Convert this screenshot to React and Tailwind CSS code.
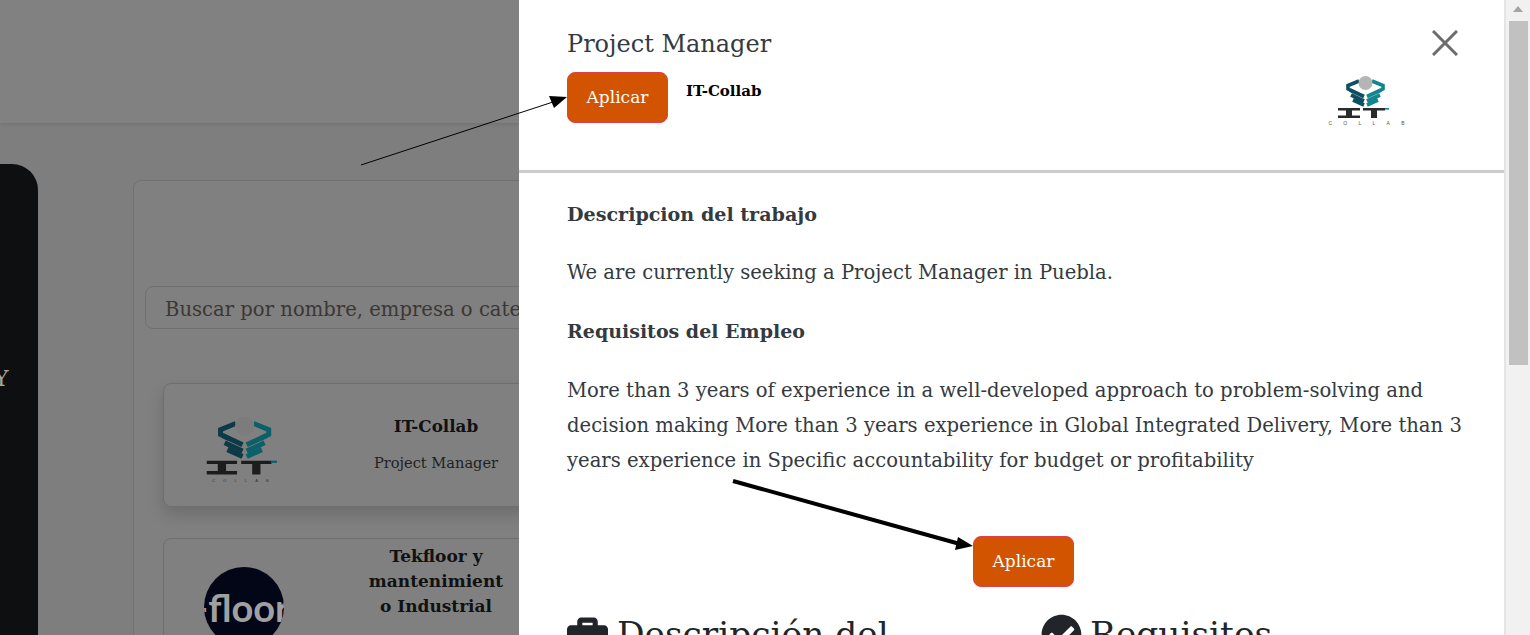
import React from 'react';
import { FaBriefcase, FaCheckCircle } from 'react-icons/fa';

function ItLogo({ className, dim }) {
  const ink = dim ? '#1c1c1c' : '#2a2a2a';
  const teal = dim ? '#0c6068' : '#12858f';
  const navy = dim ? '#0c3a46' : '#0f4f62';
  const ball = dim ? '#7c7c7c' : '#b5b5b5';
  return (
    <svg viewBox="0 0 77 52" className={className}>
      <g fill="none" strokeWidth="3.6">
        <path d="M31 6 L20 10.5 L20 14 L26 17" stroke={navy} />
        <path d="M44 6 L55 10.5 L55 14 L49 17" stroke={teal} />
        <path d="M22 15 L36 21.5 M23 20 L36 26 M25 25 L36 30" stroke={navy} />
        <path d="M53 15 L39 21.5 M52 20 L39 26 M50 25 L39 30" stroke={teal} />
      </g>
      <circle cx="37.5" cy="8" r="7" fill={ball} />
      <path d="M10 33 H32 V35.5 H24 V40.5 H32 V43 H10 V40.5 H18 V35.5 H10 Z M35 33 H57 V35.5 H49 V43 H43 V35.5 H35 Z" fill={ink} />
      <rect x="57" y="33" width="4" height="1.6" fill={teal} />
      {dim ? (
        <text x="14" y="48.5" fontSize="3" textLength="41" fill="#333" fontFamily="Liberation Sans, sans-serif">COLLAB</text>
      ) : (
        <text x="0.5" y="50" fontSize="5" textLength="76" fill="#555" fontFamily="Liberation Sans, sans-serif">COLLAB</text>
      )}
    </svg>
  );
}

function Arrows() {
  return (
    <svg className="absolute left-0 top-0 pointer-events-none" width="1530" height="635">
      <line x1="361" y1="165" x2="556" y2="101" stroke="#000" strokeWidth="1" />
      <path d="M567 97 L549 96 L554 108 Z" fill="#000" />
      <line x1="733" y1="481" x2="960" y2="544" stroke="#000" strokeWidth="4" />
      <path d="M973 546 L958 537 L955 550 Z" fill="#000" />
    </svg>
  );
}

function ApplyButton({ className }) {
  return (
    <button className={`flex h-[51px] w-[101px] items-center justify-center rounded-[8px] border border-[#e0404a] bg-[#d35400] text-[17px] text-white ${className}`}>
      Aplicar
    </button>
  );
}

function BackgroundPage() {
  return (
    <div className="flex h-[635px] w-[519px] shrink-0 flex-col overflow-hidden bg-[#7e7e7e]">
      <div className="h-[123px] shrink-0 bg-[#818181] shadow-[0_1px_4px_rgba(0,0,0,0.12)]" />
      <div className="flex flex-1 pt-[41px]">
        <div className="h-[600px] w-[38px] shrink-0 rounded-tr-[26px] bg-[#0e0f11] pt-[200px]">
          <span className="-ml-[6px] block text-[22px] leading-[30px] text-[#b0a898]">Y</span>
        </div>
        <div className="ml-[95px] mt-[16px] h-[600px] w-[500px] shrink-0 rounded-[8px] border border-[#707070] bg-[#808080] pl-[11px] pt-[105px]">
          <div className="flex h-[43px] w-[480px] items-center overflow-hidden rounded-[8px] border border-[#707070] pl-[19px] pt-[4px] text-[19.6px] whitespace-nowrap text-[#3d3733]">
            Buscar por nombre, empresa o categoría
          </div>
          <div className="ml-[18px] mt-[54px] flex h-[124px] w-[460px] rounded-[8px] border border-[#6e6e6e] shadow-[0_8px_16px_rgba(0,0,0,0.15)]">
            <div className="w-[164px] pl-[29px] pt-[31px]">
              <ItLogo dim className="h-[72px] w-[106px]" />
            </div>
            <div className="flex w-[216px] flex-col items-center justify-center gap-[13px] pb-[4px]">
              <div className="text-[16.8px] font-bold leading-[26px] text-[#111]">IT-Collab</div>
              <div className="text-[14.6px] leading-[22px] text-[#1f1f1f]">Project Manager</div>
            </div>
          </div>
          <div className="ml-[18px] mt-[31px] flex h-[124px] w-[460px] rounded-[8px] border border-[#6e6e6e]">
            <div className="flex w-[160px] justify-center pt-[28px]">
              <div className="flex h-[80px] w-[80px] shrink-0 items-center overflow-hidden rounded-full bg-[#020617] font-['Lato',sans-serif] text-[38px] leading-none font-bold whitespace-nowrap text-[#a0a0a0]">
                <span className="-ml-[10px]">-floor</span>
              </div>
            </div>
            <div className="ml-[42px] w-[140px] pt-[5px] text-center text-[17px] font-bold leading-[25px] break-words text-[#111]">
              Tekfloor y mantenimiento Industrial
            </div>
          </div>
        </div>
      </div>
    </div>
  );
}

function Drawer() {
  return (
    <div className="h-[635px] flex-1 overflow-hidden bg-white text-[#343a40]">
      <div className="flex h-[173px] border-b-[3px] border-[#cccccc] pl-[48px] pr-[46px]">
        <div className="flex-1 pt-[26px]">
          <h2 className="text-[24px] leading-[36px]">Project Manager</h2>
          <div className="mt-[10px] flex">
            <ApplyButton />
            <span className="ml-[18px] pt-[7px] text-[15px] font-bold leading-[24px] text-black">IT-Collab</span>
          </div>
        </div>
        <div className="flex w-[130px] flex-col items-end pt-[30px]">
          <svg viewBox="0 0 26 26" className="h-[26px] w-[26px]" stroke="#6c6c6c" strokeWidth="3">
            <path d="M1 1 L25 25 M25 1 L1 25" />
          </svg>
          <ItLogo className="mr-[53px] mt-[19px] h-[52px] w-[77px]" />
        </div>
      </div>
      <div className="pl-[48px] pr-[38px] pt-[24px] text-[19.6px] leading-[35px]">
        <p className="text-[19.1px] font-bold">Descripcion del trabajo</p>
        <p className="mt-[23px]">We are currently seeking a Project Manager in Puebla.</p>
        <p className="mt-[24px] text-[19px] font-bold">Requisitos del Empleo</p>
        <p className="mt-[24px]">
          More than 3 years of experience in a well-developed approach to problem-solving and decision making More than 3 years experience in Global Integrated Delivery, More than 3 years experience in Specific accountability for budget or profitability
        </p>
        <div className="mt-[58px] flex justify-center">
          <ApplyButton className="ml-[14px]" />
        </div>
        <div className="mt-[25px] flex text-[#212529]">
          <div className="flex w-[474px] items-start gap-[9px]">
            <FaBriefcase className="mt-[3px] h-[41px] w-[41px] shrink-0" />
            <span className="mt-[2px] w-[340px] text-[34.4px] leading-[40px]">Descripción del trabajo</span>
          </div>
          <div className="flex items-start gap-[8px]">
            <FaCheckCircle className="mt-[2px] h-[41px] w-[41px] shrink-0" />
            <span className="mt-[2px] text-[34.4px] leading-[40px]">Requisitos</span>
          </div>
        </div>
      </div>
    </div>
  );
}

function Scrollbar() {
  return (
    <div className="flex h-[635px] w-[26px] shrink-0 flex-col items-center border-l-2 border-[#e4e4e4] bg-[#f1f1f1]">
      <div className="mt-[6px] h-0 w-0 border-x-[5px] border-b-[6px] border-x-transparent border-b-[#a3a3a3]" />
      <div className="mt-[9px] h-[344px] w-[19px] bg-[#c1c1c1]" />
    </div>
  );
}

export default function App() {
  return (
    <div className="relative flex h-[635px] w-[1530px] overflow-hidden font-['DejaVu_Serif',serif]">
      <BackgroundPage />
      <Drawer />
      <Scrollbar />
      <Arrows />
    </div>
  );
}
